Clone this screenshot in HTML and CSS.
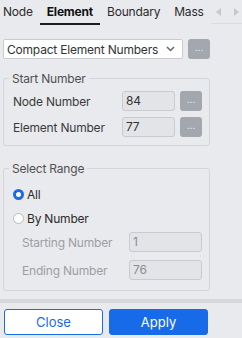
FILE: index.html
```html
<!DOCTYPE html>
<html lang="en">
<head>
  <meta charset="UTF-8">
  <title>Compact Element Numbers</title>
  <link rel="stylesheet" href="styles.css">
</head>
<body>
  <div class="tabs">
    <div class="tab">Node</div>
    <div class="tab active">Element</div>
    <div class="tab">Boundary</div>
    <div class="tab">Mass</div>
    <div class="tab-arrows">
      <span class="arrow left"></span>
      <span class="arrow right"></span>
    </div>
  </div>

  <div class="panel">
    <div class="select-row">
      <div class="select">
        <span>Compact Element Numbers</span>
        <svg class="chevron" width="9" height="6" viewBox="0 0 9 6"><path d="M1 1l3.5 3.5L8 1" fill="none" stroke="#666" stroke-width="1.5"/></svg>
      </div>
      <button class="dots">...</button>
    </div>

    <fieldset class="group">
      <legend>Start Number</legend>
      <div class="row">
        <label>Node Number</label>
        <input class="num" value="84">
        <button class="dots">...</button>
      </div>
      <div class="row">
        <label>Element Number</label>
        <input class="num" value="77">
        <button class="dots">...</button>
      </div>
    </fieldset>

    <fieldset class="group range">
      <legend>Select Range</legend>
      <div class="radio-row"><span class="radio checked"></span>All</div>
      <div class="radio-row"><span class="radio"></span>By Number</div>
      <div class="row sub disabled">
        <label>Starting Number</label>
        <input class="num wide" value="1" disabled>
      </div>
      <div class="row sub disabled">
        <label>Ending Number</label>
        <input class="num wide" value="76" disabled>
      </div>
    </fieldset>
  </div>

  <div class="footer">
    <button class="btn close">Close</button>
    <button class="btn apply">Apply</button>
  </div>
</body>
</html>
```

FILE: styles.css
```css
body {
  margin: 0;
  width: 242px;
  height: 338px;
  background: #e9eaee;
  font-family: 'Inter', 'Noto Sans', sans-serif;
  font-size: 12px;
  letter-spacing: -0.2px;
  color: #3a3a3a;
  display: flex;
  flex-direction: column;
  overflow: hidden;
  white-space: nowrap;
}

.tabs {
  display: flex;
  flex-shrink: 0;
  height: 25px;
  align-items: stretch;
}

.tab {
  padding: 4px 7px 0;
  color: #2b2b2b;
  border-bottom: 2px solid transparent;
  box-sizing: border-box;
}
.tab:first-child {
  padding-left: 3px;
}
.tab.active {
  font-weight: 700;
  color: #111;
  border-bottom: 2px solid #1c1c1c;
}

.tab-arrows {
  flex: 1;
  display: flex;
  align-items: flex-start;
  padding: 8px 0 0 5px;
  gap: 13px;
  border-bottom: 1px solid #dcdde1;
  margin-bottom: 1px;
}

.arrow {
  width: 0;
  height: 0;
  border-top: 4px solid transparent;
  border-bottom: 4px solid transparent;
}
.arrow.left {
  border-right: 5px solid #c6c8cc;
}
.arrow.right {
  border-left: 5px solid #c6c8cc;
}

.panel {
  flex: 1;
}

.select-row {
  display: flex;
  gap: 5px;
  margin: 14px 0 0 3px;
}

.select {
  width: 180px;
  height: 20px;
  box-sizing: border-box;
  background: #fff;
  border: 1px solid #c9cbd0;
  border-radius: 2px;
  display: flex;
  align-items: center;
  justify-content: space-between;
  padding: 0 7px 0 3px;
  color: #333;
}

.dots {
  width: 22px;
  height: 20px;
  padding: 0 0 4px;
  border: none;
  border-radius: 3px;
  background: #a3a7ae;
  color: #f2f3f5;
  font-family: inherit;
  font-size: 10px;
}

.group {
  margin: 12px 32px 0 3px;
  padding: 5px 7px 8px 9px;
  border: 1px solid #d3d5da;
  border-radius: 3px;
}

.group legend {
  padding: 0 3px;
  margin-left: -4px;
  color: #505050;
  line-height: 15px;
}

.row {
  display: flex;
  align-items: center;
  height: 20px;
  gap: 5px;
}
.row + .row {
  margin-top: 6px;
}
.row label {
  flex: 1;
}

.num {
  width: 53px;
  height: 20px;
  box-sizing: border-box;
  border: 1px solid #c9cbd0;
  border-radius: 3px;
  background: #e3e4e8;
  font-family: inherit;
  font-size: 12px;
  letter-spacing: inherit;
  color: #333;
  padding: 0 3px 2px;
}
.num.wide {
  width: 73px;
}

.range {
  margin-top: 15px;
  padding-top: 6px;
  padding-bottom: 10px;
}

.radio-row {
  display: flex;
  align-items: center;
  height: 24px;
  gap: 3px;
  color: #2b2b2b;
}

.radio {
  width: 11px;
  height: 11px;
  box-sizing: border-box;
  border-radius: 50%;
  border: 1px solid #b9bbc0;
  background: #fff;
}
.radio.checked {
  border: 3px solid #1a6be8;
}

.row.sub {
  padding-left: 9px;
  margin-top: 2px;
}
.row.sub + .row.sub {
  margin-top: 8px;
}
.disabled label {
  color: #9c9ea3;
}
.disabled .num {
  color: #8a8c90;
}

.footer {
  border-top: 4px solid #d7d8dc;
  margin-bottom: 3px;
  padding: 6px 34px 0 4px;
  display: flex;
  gap: 6px;
}

.btn {
  flex: 1;
  height: 26px;
  border-radius: 3px;
  font-family: inherit;
  font-size: 13px;
}
.btn.close {
  background: #fff;
  border: 1px solid #1a6be8;
  color: #1a6be8;
}
.btn.apply {
  background: #176be8;
  border: 1px solid #176be8;
  color: #fff;
}
```
